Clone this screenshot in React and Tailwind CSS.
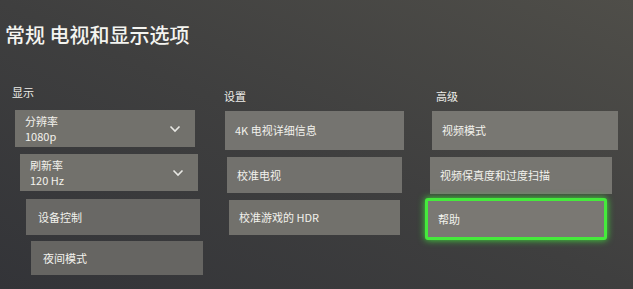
const font = { fontFamily: '"Noto Sans CJK SC", "Noto Sans", sans-serif' };

function Chevron() {
  return (
    <svg width="12" height="8" viewBox="0 0 12 8" className="shrink-0">
      <polyline points="1.5,1.5 6,6 10.5,1.5" fill="none" stroke="#e8e8e4" strokeWidth="1.6" />
    </svg>
  );
}

function Tile({ label, value, className = '', focused = false }) {
  return (
    <div
      className={
        'flex items-center justify-between pl-[10px] pr-[14px] text-[11px] text-[#f2f2ed] ' +
        (focused
          ? 'bg-[#7a7873] border-[3px] border-[#45ea3c] rounded-[3px] shadow-[0_0_7px_#3fe23a] '
          : 'bg-[#72716c] ') +
        className
      }
    >
      {value ? (
        <>
          <div className="flex flex-col leading-[15px]">
            <span>{label}</span>
            <span>{value}</span>
          </div>
          <Chevron />
        </>
      ) : (
        <span>{label}</span>
      )}
    </div>
  );
}

export default function App() {
  return (
    <div
      style={font}
      className="w-[633px] h-[289px] overflow-hidden bg-linear-to-tr from-[#333438] via-[#3f3f3f] to-[#4f4e49] text-white"
    >
      <h1 className="pl-[5px] pt-[21px] text-[20px] font-medium leading-[28px] text-[#f4f4f0]">
        常规 电视和显示选项
      </h1>

      <div className="flex pl-[12px] pt-[36px]">
        {/* display */}
        <div className="w-[192px] flex flex-col">
          <div className="text-[11px] leading-[14px] text-[#eeeeea] h-[25px]">显示</div>
          <div className="flex flex-col">
            <Tile label="分辨率" value="1080p" className="ml-[3px] w-[180px] h-[37px] bg-[#6c6b68]" />
            <Tile label="刷新率" value="120 Hz" className="ml-[8px] w-[178px] h-[37px] mt-[7px] bg-[#6c6b68]" />
            <Tile label="设备控制" className="ml-[14px] w-[174px] h-[36px] mt-[8px] pl-[12px] bg-[#696865]" />
            <Tile label="夜间模式" className="ml-[19px] w-[172px] h-[34px] mt-[6px] pl-[12px] bg-[#666562]" />
          </div>
        </div>

        {/* settings */}
        <div className="ml-[20px] w-[182px] flex flex-col">
          <div className="text-[11px] leading-[14px] text-[#eeeeea] h-[26px] pt-[4px]">设置</div>
          <div className="flex flex-col">
            <Tile label="4K 电视详细信息" className="ml-[1px] w-[179px] h-[39px] bg-[#757470]" />
            <Tile label="校准电视" className="ml-[3px] w-[175px] h-[36px] mt-[7px] bg-[#72716d]" />
            <Tile label="校准游戏的 HDR" className="ml-[5px] w-[171px] h-[35px] mt-[7px] bg-[#706f6b]" />
          </div>
        </div>

        {/* advanced */}
        <div className="ml-[19px] w-[195px] flex flex-col">
          <div className="text-[11px] leading-[14px] text-[#eeeeea] h-[26px] pt-[4px] pl-[11px]">高级</div>
          <div className="flex flex-col">
            <Tile label="视频模式" className="ml-[7px] w-[186px] h-[39px] bg-[#787772]" />
            <Tile label="视频保真度和过度扫描" className="ml-[5px] w-[182px] h-[37px] mt-[7px] pl-[9px] bg-[#777671]" />
            <Tile label="帮助" focused className="w-[182px] h-[42px] mt-[4px] pl-[9px]" />
          </div>
        </div>
      </div>
    </div>
  );
}
